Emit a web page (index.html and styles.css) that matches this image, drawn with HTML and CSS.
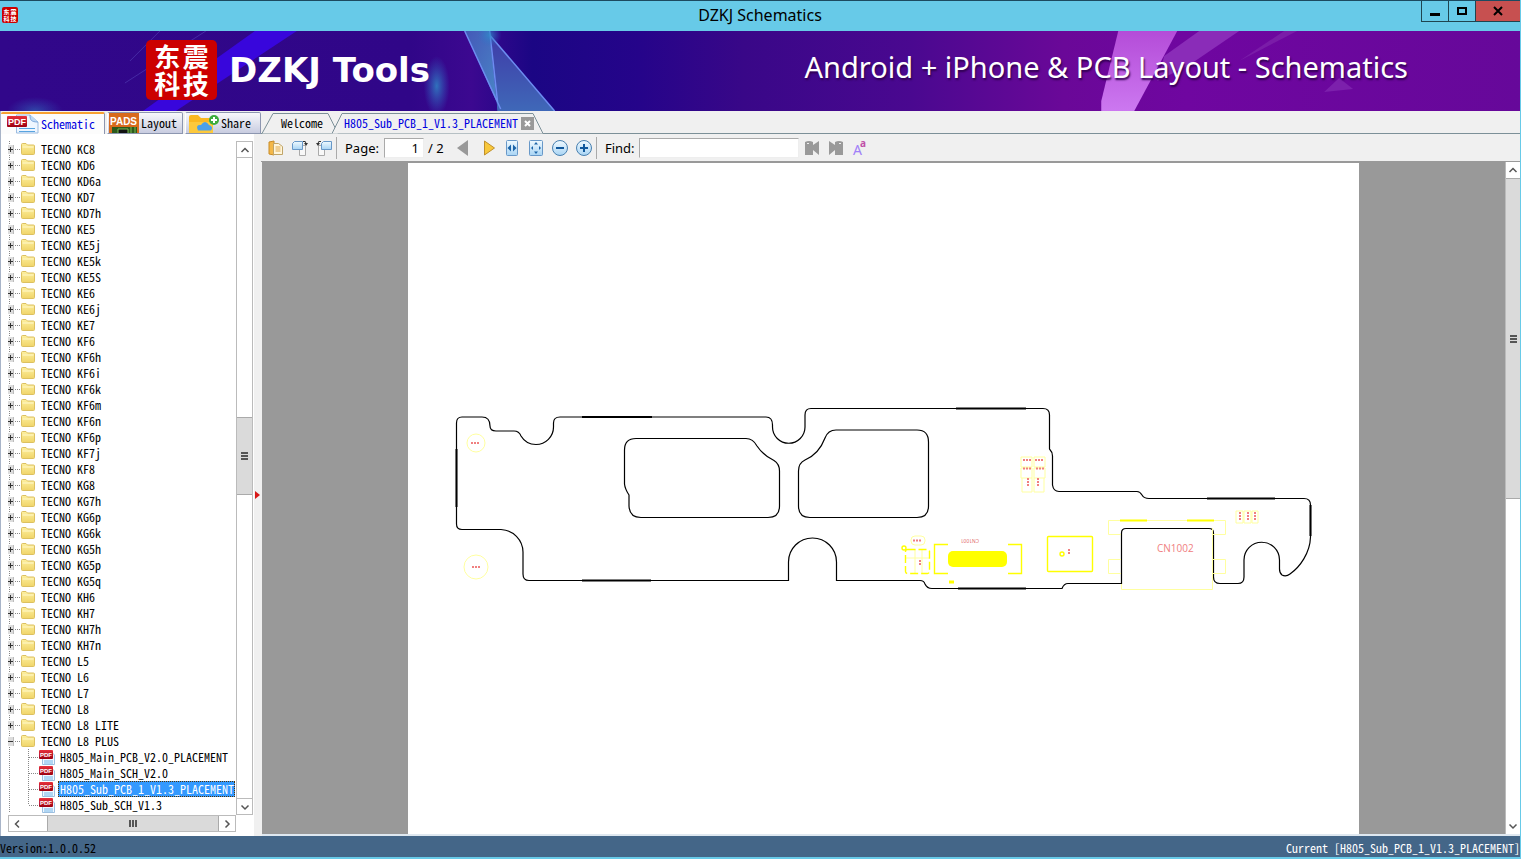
FILE: index.html
```html
<!DOCTYPE html>
<html lang="en">
<head>
  <meta charset="UTF-8" />
  <title>DZKJ Schematics</title>
  <link rel="stylesheet" href="styles.css">
</head>
<body>
  <svg class="defs" aria-hidden="true">
    <defs>
      <linearGradient id="gFolder" x1="0" y1="0" x2="0" y2="1"><stop offset="0" stop-color="#fdf0a0"/><stop offset="1" stop-color="#f0d468"/></linearGradient>
      <linearGradient id="gBlue" x1="0" y1="0" x2="0" y2="1"><stop offset="0" stop-color="#f0faff"/><stop offset="1" stop-color="#a8d4f4"/></linearGradient>
      <linearGradient id="gRed" x1="0" y1="0" x2="0" y2="1"><stop offset="0" stop-color="#e8303c"/><stop offset="1" stop-color="#9c0010"/></linearGradient>
    </defs>
    <symbol id="folder" viewBox="0 0 14 12">
      <path d="M.5 10.500V1.500q0-1 1-1H5l1.500 1.500H12.500q1 0 1 1V10.500q0 1-1 1H1.500q-1 0-1-1z" fill="url(#gFolder)" stroke="#dcc060"/>
      <path d="M1.500 4H12.500" stroke="#fff8cc"/>
    </symbol>
    <symbol id="pdf" viewBox="0 0 16 16">
      <path d="M3.500 2v13.500h12V6l-4-4z" fill="#f2f8ff" stroke="#9cbfe0"/>
      <path d="M5 12h9M5 14h9" stroke="#6fb4e8"/>
      <rect x="0" y="1" width="14" height="9" rx="1" fill="url(#gRed)"/>
      <text x="1" y="8" class="pdf-text">PDF</text>
    </symbol>
    <symbol id="up" viewBox="0 0 10 10"><path d="M1.500 7L5 3.500 8.500 7" fill="none" stroke="#555" stroke-width="1.500"/></symbol>
    <symbol id="down" viewBox="0 0 10 10"><path d="M1.500 3.500L5 7 8.500 3.500" fill="none" stroke="#555" stroke-width="1.500"/></symbol>
    <symbol id="left" viewBox="0 0 10 10"><path d="M7 1.500L3.500 5 7 8.500" fill="none" stroke="#555" stroke-width="1.500"/></symbol>
    <symbol id="right" viewBox="0 0 10 10"><path d="M3.500 1.500L7 5 3.500 8.500" fill="none" stroke="#555" stroke-width="1.500"/></symbol>
  </svg>

  <header class="titlebar">
    <div class="app-icon"><span>东</span><span>震</span><span>科</span><span>技</span></div>
    <div class="title">DZKJ Schematics</div>
    <div class="window-buttons">
      <button aria-label="Minimize"><svg width="10" height="10"><path d="M0 8.500H10" stroke="#000" stroke-width="3"/></svg></button>
      <button aria-label="Maximize"><svg width="10" height="10"><path d="M1 2H9V8H1z" fill="none" stroke="#000" stroke-width="2"/></svg></button>
      <button class="close" aria-label="Close"><svg width="10" height="10"><path d="M1 1L9 9M9 1L1 9" stroke="#000" stroke-width="2"/></svg></button>
    </div>
  </header>

  <div class="banner">
    <svg class="banner-art" viewBox="0 0 1521 80" preserveAspectRatio="none" aria-hidden="true">
      <defs>
        <linearGradient id="glass" x1="0" y1="0" x2="1" y2="1"><stop offset="0" stop-color="#4458b8"/><stop offset="1" stop-color="#4a8cc8"/></linearGradient>
        <linearGradient id="glass2" x1="0" y1="0" x2="0" y2="1"><stop offset="0" stop-color="#3f3ba8"/><stop offset="1" stop-color="#3f68b8"/></linearGradient>
        <linearGradient id="pink" x1="0" y1="0" x2="0" y2="1"><stop offset="0" stop-color="#b44cd8"/><stop offset="1" stop-color="#cc78f0"/></linearGradient>
        <radialGradient id="glow"><stop offset="0" stop-color="#2f8cc8" stop-opacity=".8"/><stop offset="1" stop-color="#2f6cc8" stop-opacity="0"/></radialGradient>
      </defs>
      <path d="M255 0H297L176 80H143z" fill="#3806dc"/>
      <path d="M206 0L125 52M160 0L130 30" stroke="#5a4cc0" opacity=".5"/>
      <ellipse cx="437" cy="55" rx="13" ry="30" fill="url(#glow)"/>
      <ellipse cx="35" cy="80" rx="28" ry="14" fill="url(#glow)" opacity=".6"/>
      <path d="M465 0H490L498 80H501z" fill="url(#glass)"/>
      <path d="M490 4L555 80H498z" fill="url(#glass2)"/>
      <path d="M465 0L501 78M490 0L498 72M490 4L555 80" fill="none" stroke="#6c8cf0" stroke-width="1.500"/>
      <circle cx="490" cy="4" r="12" fill="url(#glow)"/>
      <path d="M1200 0H1240L1190 34 1158 50 1165 25z" fill="#8a2cb8"/>
      <path d="M1285 0H1298L1240 30z" fill="#7a1ca8"/>
      <path d="M1119 0H1178L1135 80H1102V70z" fill="url(#pink)"/>
      <path d="M1325 61L1340 47 1354 58z" fill="#7c20ac"/>
    </svg>
    <div class="logo"><span>东</span><span>震</span><span>科</span><span>技</span></div>
    <h1>DZKJ Tools</h1>
    <p>Android + iPhone &amp; PCB Layout - Schematics</p>
  </div>

  <main>
    <aside class="sidebar">
      <nav class="side-tabs">
        <button class="active">
          <svg width="32" height="20" viewBox="0 0 32 20" aria-hidden="true">
            <path d="M9.500 1v18H31V8l-8-7z" fill="#eef6ff" stroke="#9cbce0"/><path d="M23 1c0 5 1 7 8 7" fill="#bcd8f4" stroke="#7ca8dc"/>
            <path d="M12 14.500h16M12 17.500h16" stroke="#58a4e0"/>
            <rect x="0" y="2" width="20" height="11" rx="1" fill="url(#gRed)"/><text x="1" y="11" class="pdf-tab">PDF</text>
          </svg>Schematic
        </button>
        <button>
          <svg width="30" height="20" viewBox="0 0 30 20" aria-hidden="true">
            <rect width="30" height="20" fill="#d86a1c"/><rect x="3" y="14" width="25" height="6" fill="#2c5a1c"/>
            <path d="M9 20v-4h10v4M22 14v6M26 14v6" fill="#111" stroke="#78b850"/><text x="1" y="12" class="pads">PADS</text>
          </svg>Layout
        </button>
        <button>
          <svg width="32" height="20" viewBox="0 0 32 20" aria-hidden="true">
            <path d="M2 20V4q0-2 2-2h7l3 3h10q2 0 2 2v13z" fill="#fbb820"/><path d="M2 20V9h24v11z" fill="#fdc93c"/>
            <path d="M11 17.500q-3-6 3-5.500 4-6 8 0 5 2 2 5.500z" fill="#4ca0e8"/>
            <circle cx="27" cy="7" r="5" fill="#3cac3c"/><path d="M24 7h6M27 4v6" stroke="#fff" stroke-width="2"/>
          </svg>Share
        </button>
      </nav>
      <div class="tree-box">
        <ul class="tree" id="tree"></ul>
        <div class="vscroll tree-scroll">
          <button aria-label="Scroll up"><svg><use href="#up"/></svg></button>
          <div class="space-before"></div>
          <div class="thumb"><i></i></div>
          <div class="space-after"></div>
          <button aria-label="Scroll down"><svg><use href="#down"/></svg></button>
        </div>
        <div class="hscroll">
          <button aria-label="Scroll left"><svg><use href="#left"/></svg></button>
          <div class="thumb"><i></i></div>
          <button aria-label="Scroll right"><svg><use href="#right"/></svg></button>
        </div>
      </div>
      <button class="splitter" aria-label="Collapse sidebar"><svg width="5" height="8"><path d="M0 0L5 4 0 8z" fill="#d81818"/></svg></button>
    </aside>

    <section class="document">
      <nav class="doc-tabs">
        <button class="welcome">
          <svg viewBox="0 0 76 21" preserveAspectRatio="none" aria-hidden="true"><path d="M0 20.500L11 .5H66L76 20.500"/></svg>
          <span>Welcome</span>
        </button>
        <div class="open-tab">
          <svg viewBox="0 0 212 21" preserveAspectRatio="none" aria-hidden="true"><path d="M0 20.500L10 .5H201L211 20.500"/></svg>
          <a href="#">H805_Sub_PCB_1_V1.3_PLACEMENT</a>
          <button aria-label="Close tab"><svg width="7" height="7"><path d="M1 1L6 6M6 1L1 6" stroke="#fff" stroke-width="2"/></svg></button>
        </div>
      </nav>

      <div class="toolbar">
        <button aria-label="Open"><svg viewBox="0 0 16 16"><path d="M1 2l5-1v14l-5-1z" fill="#f4b848" stroke="#c88c28"/><path d="M5.500 3.500h5l4 3v8h-9z" fill="#fff6dc" stroke="#c0a468"/><path d="M7.500 7h5M7.500 9h5M7.500 11h5" stroke="#e0a848"/></svg></button>
        <button aria-label="Rotate right"><svg viewBox="0 0 16 16"><path d="M7.500 5.500h6v10h-6z" fill="#f8f8f8" stroke="#aaa"/><path d="M.5 3.500l2-2h8v8H.5z" fill="url(#gBlue)" stroke="#6898c8"/><path d="M11 1.500q3-1 3 2" fill="none" stroke="#333"/><path d="M12 3h4l-2 3z" fill="#333"/></svg></button>
        <button aria-label="Rotate left"><svg viewBox="0 0 16 16"><path d="M2.500 5.500h6v10h-6z" fill="#f8f8f8" stroke="#aaa"/><path d="M5.500 3.500l2-2h8v8h-10z" fill="url(#gBlue)" stroke="#6898c8"/><path d="M5 1.500q-3-1-3 2" fill="none" stroke="#333"/><path d="M0 3h4l-2 3z" fill="#333"/></svg></button>
        <hr>
        <label for="page">Page:</label>
        <input id="page" type="text" value="1">
        <span class="total">/ 2</span>
        <button aria-label="Previous page"><svg viewBox="0 0 16 16"><path d="M12 0v16L1 8z" fill="#999"/></svg></button>
        <button aria-label="Next page"><svg viewBox="0 0 16 16"><path d="M4.500 1v14L14.500 8z" fill="#f8c83c" stroke="#c0902c"/></svg></button>
        <button aria-label="Fit width"><svg viewBox="0 0 16 16"><rect x="2.500" y=".5" width="11" height="15" rx="1" fill="url(#gBlue)" stroke="#6898c8"/><path d="M7 4.500v7L3.500 8zM9 4.500v7L12.500 8z" fill="#1c64a8"/></svg></button>
        <button aria-label="Fit page"><svg viewBox="0 0 16 16"><rect x="1.500" y=".5" width="13" height="15" rx="1" fill="url(#gBlue)" stroke="#6898c8"/><path d="M8 2l2 2.500H6zM8 14l2-2.500H6zM3 8l2-2v4zM13 8l-2-2v4z" fill="#1c64a8"/></svg></button>
        <button aria-label="Zoom out"><svg viewBox="0 0 16 16"><circle cx="8" cy="8" r="7.500" fill="url(#gBlue)" stroke="#4880b0"/><path d="M4 8h8" stroke="#10589c" stroke-width="2"/></svg></button>
        <button aria-label="Zoom in"><svg viewBox="0 0 16 16"><circle cx="8" cy="8" r="7.500" fill="url(#gBlue)" stroke="#4880b0"/><path d="M4 8h8M8 4v8" stroke="#10589c" stroke-width="2"/></svg></button>
        <hr>
        <label for="find">Find:</label>
        <input id="find" type="text">
        <button aria-label="Find previous"><svg viewBox="0 0 16 16"><path d="M1 2q4-2 8 0v3l6-4v14l-6-5v5H1z" fill="#999"/><path d="M3 3.500h2" stroke="#eee"/></svg></button>
        <button aria-label="Find next"><svg viewBox="0 0 16 16"><path d="M15 2q-4-2-8 0v3L1 1v14l6-5v5h8z" fill="#999"/><path d="M11 3.500h2" stroke="#eee"/></svg></button>
        <button aria-label="Match case"><svg viewBox="0 0 16 16"><text x="1" y="15" class="case-big">A</text><text x="8" y="7" class="case-small">a</text></svg></button>
      </div>

      <div class="viewer">
        <div class="canvas">
          <svg class="sheet" viewBox="408 163 951 671" role="img" aria-label="H805 sub board placement">
            <g class="outline">
              <path d="M462 417H482Q490 417 490 426 490 431 496 431H514Q519 431 521 436A17.500 17.500 0 0 0 536 444.500 17.500 17.500 0 0 0 553.500 427V423Q553.500 417 560 417H766Q772.500 417 772.500 425V427A16 16 0 0 0 805 427V415Q805 408.500 811 408.500H1043Q1049.500 408.500 1049.500 415V449Q1052.500 452 1052.500 456V485Q1053.500 491.500 1059 491.500H1137Q1140 491.500 1142 495 1144 498.500 1149 498.500H1304Q1310.500 498.500 1310.500 505V537C1310 553 1300 567 1290 574Q1286 577 1282 575 1279.500 573 1279.500 569V560A17.500 17.500 0 0 0 1244 560V577Q1244 583.500 1238 583.500H1220Q1213.500 583.500 1213.500 577V533Q1213.500 528.500 1209 528.500H1126Q1121.500 528.500 1121.500 533V583.500H1068Q1064 583.500 1062 588.500H932Q927 588.500 925 584 924 580.500 920 580.500H836.500V562A24 24 0 0 0 788.500 562V580.500H529Q523 580.500 523 574V552A23 23 0 0 0 501 529.500H462Q456.500 529.500 456.500 524V423Q456.500 417 462 417z"/>
              <path d="M636 438.500H746Q753 438.500 757 446 763 455 774 460.500 779.500 464 779.500 471V506Q779.500 517.500 768 517.500H641Q629.500 517.500 629 506V495Q625 489 624.500 484V450Q624.500 438.500 636 438.500z"/>
              <path d="M836 430H917Q928.500 430 928.500 442V506Q928.500 517.500 917 517.500H810Q798.500 517.500 798.500 506V471Q798.500 463 805 460 819 454 825 438 828 430 836 430z"/>
            </g>
            <path class="thick" d="M582 417H652M956 408.500H1026M456.500 449V507M582 580.500H651M958 588.500H1026M1207 498.500H1275M1310.500 505V536"/>
            <g class="faint">
              <circle cx="476" cy="443" r="9"/><circle cx="476" cy="567" r="12"/>
              <path d="M1021 457h11v10h-11zM1034 457h11v10h-11zM1021 468h11v10h-11zM1034 468h11v10h-11zM1022 478v14h10v-14M1034 478v14h10v-14"/>
              <rect x="911" y="536" width="14" height="9" rx="4"/><path d="M1236 511h7v12h-7zM1244 511h7v12h-7zM1252 511h6v12h-6z"/>
              <path d="M1121 520.500H1108.500V534.500H1121M1213 520.500H1225.500V534.500H1213M1109 520.500H1225M1121 559.500H1108.500V573.500H1121M1213 559.500H1225.500V573.500H1213M1121.500 584V589.500H1212.500V528"/>
              <path d="M906 558h23M915 549v24M922 549v24"/>
            </g>
            <g class="marks">
              <rect x="1047.500" y="536.500" width="45" height="35" rx="1"/><circle cx="1062" cy="554" r="2"/>
              <path d="M948 544.500H934.500V573.500H948M1008 544.500H1021.500V573.500H1008"/>
              <path d="M1120 520.500H1147M1187 520.500H1214" stroke-width="2"/>
              <rect x="905.500" y="549.500" width="24" height="24" rx="2" stroke-dasharray="8 3"/>
              <circle cx="904" cy="548" r="2"/><path d="M949 582h5" stroke-width="3"/>
            </g>
            <rect x="948" y="551" width="59" height="16" rx="5" fill="#ff0"/>
            <path class="labels" d="M471 443h8M472 567h9M1023 460h8M1035 460h8M1023 468.500h8M1036 468.500h8M1028 478v8M1038 478v8M913 540.500h9M1069 549v6M920 560v6M1240 512v9M1248 512v9M1255 512v9"/>
            <text class="part" x="1157" y="552">CN1002</text>
            <text class="part-small" transform="rotate(180 971 541)" x="963" y="543">CN1001</text>
          </svg>
        </div>
        <div class="vscroll doc-scroll">
          <button aria-label="Scroll up"><svg><use href="#up"/></svg></button>
          <div class="thumb"><i></i></div>
          <div class="space-after"></div>
          <button aria-label="Scroll down"><svg><use href="#down"/></svg></button>
        </div>
      </div>
    </section>
  </main>

  <footer>
    <span>Version:1.0.0.52</span>
    <span class="current">Current [H805_Sub_PCB_1_V1.3_PLACEMENT]</span>
  </footer>

  <script>
    const models = [
      "KC8", "KD6", "KD6a", "KD7", "KD7h", "KE5", "KE5j", "KE5k", "KE5S", "KE6", "KE6j", "KE7",
      "KF6", "KF6h", "KF6i", "KF6k", "KF6m", "KF6n", "KF6p", "KF7j", "KF8", "KG8", "KG7h", "KG6p",
      "KG6k", "KG5h", "KG5p", "KG5q", "KH6", "KH7", "KH7h", "KH7n", "L5", "L6", "L7", "L8",
      "L8 LITE", "L8 PLUS"
    ];
    const files = [
      "H805_Main_PCB_V2.0_PLACEMENT", "H805_Main_SCH_V2.0",
      "H805_Sub_PCB_1_V1.3_PLACEMENT", "H805_Sub_SCH_V1.3"
    ];
    const tree = document.getElementById("tree");

    // phone models
    models.forEach(model => {
      const open = model === "L8 PLUS";
      const li = document.createElement("li");
      li.innerHTML = `<button class="expander${open ? " open" : ""}" aria-label="Toggle ${model}"></button><svg class="folder"><use href="#folder"/></svg><a href="#">TECNO ${model}</a>`;
      tree.appendChild(li);
    });

    // files of the open model
    files.forEach(file => {
      const li = document.createElement("li");
      li.className = "file";
      li.innerHTML = `<svg class="pdf"><use href="#pdf"/></svg><a href="#">${file}</a>`;
      if (file.includes("Sub_PCB")) li.classList.add("selected");
      tree.appendChild(li);
    });
  </script>
</body>
</html>
```

FILE: styles.css
```css
* {
  box-sizing: border-box;
}

body {
  margin: 0;
  height: 100vh;
  display: flex;
  flex-direction: column;
  background: #f0f0f0;
  border-right: 1px solid #67cae8;
  border-bottom: 2px solid #67cae8;
  font-family: "Noto Sans Mono CJK SC", "Liberation Mono", monospace;
  font-size: 12px;
  line-height: 16px;
  color: #000;
  overflow: hidden;
}

button {
  border: 0;
  padding: 0;
  margin: 0;
  background: none;
  font: inherit;
  color: inherit;
}

a {
  color: inherit;
  text-decoration: none;
}

.defs {
  position: absolute;
  width: 0;
  height: 0;
}

/* title bar */
.titlebar {
  display: grid;
  grid-template-columns: 1fr auto 1fr;
  flex: none;
  height: 31px;
  background: #67cae8;
  border-top: 1px solid #1c4a60;
}

.app-icon, .logo {
  display: grid;
  grid-template-columns: 1fr 1fr;
  background: #cc0000;
  color: #fff;
  font-family: "Noto Sans CJK SC", sans-serif;
  font-weight: bold;
  text-align: center;
}

.app-icon {
  width: 16px;
  height: 16px;
  margin: 6px 2px;
  border-radius: 2px;
  padding: 1px;
  font-size: 6px;
  line-height: 7px;
}

.title {
  font: 16px/29px "Noto Sans", sans-serif;
}

.window-buttons {
  display: flex;
  justify-content: flex-end;
}

.window-buttons button {
  width: 27px;
  height: 21px;
  border: 1px solid #1f4450;
  border-top: 0;
  border-right: 0;
  display: flex;
  align-items: center;
  justify-content: center;
}

.window-buttons .close {
  width: 45px;
  background: #c75050;
}

/* banner */
.banner {
  position: relative;
  flex: none;
  display: flex;
  align-items: center;
  height: 80px;
  padding: 0 112px 2px 146px;
  color: #fff;
  background: linear-gradient(90deg, #31078a 0, #300688 27%, #3c0890 31%, #1b0684 35%, #25048a 42%, #390788 49%, #4a0890 60%, #6a0898 70%, #6f06a0 78%, #66089a 100%);
  font-family: "Noto Sans", sans-serif;
}

.banner-art {
  position: absolute;
  top: 0;
  left: 0;
  width: 100%;
  height: 100%;
}

.logo, .banner h1, .banner p {
  position: relative;
}

.logo {
  width: 71px;
  height: 60px;
  border-radius: 5px;
  padding: 3px 7px;
  font-size: 26px;
  line-height: 26px;
}

.banner h1 {
  margin: 0 auto 0 12px;
  font: bold 34px/40px "DejaVu Sans", sans-serif;
}

.banner p {
  margin: 0 0 6px;
  font-size: 29px;
  line-height: 40px;
  text-shadow: 1px 2px 2px #300050;
}

main {
  flex: 1;
  min-height: 0;
  display: flex;
}

/* left panel */
.sidebar {
  flex: none;
  width: 261px;
  display: grid;
  grid-template: 23px 1fr / 253px 1fr;
  background: #f0f0f0;
  border-left: 1px solid #a8b4c8;
}

.side-tabs {
  grid-column: 1 / 3;
  display: flex;
  gap: 2px;
  padding-top: 1px;
}

.side-tabs button {
  display: flex;
  align-items: center;
  gap: 2px;
  width: 76px;
  padding-left: 1px;
  border: 1px solid #8c96b0;
  border-left-color: #fff;
  border-radius: 2px 2px 0 0;
  background: linear-gradient(#f8f8fc, #c8cce0);
}

.side-tabs .active {
  width: 104px;
  padding-left: 6px;
  border: 0;
  border-top: 2px solid #f8a030;
  border-right: 1px solid #8c96b0;
  background: #fcfcfc;
  color: #0000e0;
}

.tree-box {
  display: grid;
  grid-template: 1fr 17px / 1fr 17px;
  min-height: 0;
  padding: 7px 1px 4px 7px;
  background: #fff;
}

.tree {
  list-style: none;
  margin: 0;
  padding: 0;
  overflow: hidden;
  min-height: 0;
  white-space: nowrap;
}

.tree li {
  display: flex;
  align-items: center;
  height: 16px;
  background: repeating-linear-gradient(#888 0 1px, transparent 1px 2px) 1px 0 / 1px 16px no-repeat;
}

.expander {
  position: relative;
  width: 6px;
  height: 9px;
  background: linear-gradient(#333, #333) 0 4px / 5px 1px no-repeat, linear-gradient(#333, #333) 2px 2px / 1px 5px no-repeat, #ddd;
  border-right: 1px solid #bbb;
}

.expander.open {
  background: linear-gradient(#333, #333) 0 4px / 5px 1px no-repeat, #ddd;
}

.expander::after {
  content: "";
  position: absolute;
  left: 7px;
  top: 4px;
  width: 5px;
  border-top: 1px dotted #888;
}

.folder {
  width: 14px;
  height: 12px;
  margin: 0 5px 0 7px;
}

.tree a {
  height: 16px;
  line-height: 15px;
  padding: 0 1px;
}

.tree .file {
  padding-left: 31px;
  background: repeating-linear-gradient(#888 0 1px, transparent 1px 2px) 1px 0 / 1px 16px no-repeat, repeating-linear-gradient(#888 0 1px, transparent 1px 2px) 20px 0 / 1px 16px no-repeat, repeating-linear-gradient(90deg, #888 0 1px, transparent 1px 2px) 21px 8px / 10px 1px no-repeat;
}

.tree .file:last-child {
  background-size: 1px 16px, 1px 8px, 10px 1px;
}

.tree .file a {
  padding-left: 2px;
}

.pdf {
  width: 16px;
  height: 16px;
  margin-right: 3px;
}

.tree .selected a {
  background: #3399ff;
  color: #fff;
  outline: 1px dotted #553300;
  outline-offset: -1px;
}

.pdf-text {
  font: bold 6px "Liberation Sans", sans-serif;
  fill: #fff;
}

.pdf-tab {
  font: bold 9px "Liberation Sans", sans-serif;
  fill: #fff;
}

.pads {
  font: bold 10px "Liberation Sans", sans-serif;
  fill: #fff;
}

/* scroll bars */
.vscroll, .hscroll {
  display: flex;
  background: #fff;
  border: 1px solid #bbb;
}

.vscroll {
  flex-direction: column;
}

.vscroll button, .hscroll button {
  flex: none;
  display: flex;
  align-items: center;
  justify-content: center;
}

.vscroll button {
  height: 16px;
}

.vscroll svg, .hscroll svg {
  width: 10px;
  height: 10px;
}

.thumb {
  display: flex;
  align-items: center;
  justify-content: center;
  background: #dadada;
}

.vscroll .thumb {
  border-top: 1px solid #aaa;
  border-bottom: 1px solid #aaa;
}

.vscroll i {
  width: 7px;
  height: 8px;
  background: repeating-linear-gradient(#555 0 2px, transparent 2px 3px);
}

.tree-scroll button:first-child {
  border-bottom: 1px solid #bbb;
}

.tree-scroll button:last-child {
  border-top: 1px solid #bbb;
}

.tree-scroll .space-before {
  flex: 260;
}

.tree-scroll .thumb {
  flex: 76;
}

.tree-scroll .space-after {
  flex: 304;
}

.hscroll button {
  width: 16px;
}

.hscroll .thumb {
  flex: 1;
  margin-left: 22px;
  border: 1px solid #aaa;
  border-width: 0 1px;
}

.hscroll i {
  width: 8px;
  height: 7px;
  background: repeating-linear-gradient(90deg, #555 0 2px, transparent 2px 3px);
}

.splitter {
  display: flex;
  align-items: center;
  padding: 20px 0 0 1px;
}

/* document */
.document {
  flex: 1;
  min-width: 0;
  display: flex;
  flex-direction: column;
}

.doc-tabs {
  flex: none;
  display: flex;
  height: 23px;
  padding: 2px 0 0 1px;
  border-bottom: 1px solid #7c9098;
}

.welcome, .open-tab {
  position: relative;
  display: flex;
  align-items: center;
}

.welcome {
  width: 76px;
  padding-left: 19px;
}

.open-tab {
  width: 212px;
  margin-left: -6px;
  padding-left: 12px;
  gap: 3px;
  color: #0000e0;
}

.welcome > svg, .open-tab > svg {
  position: absolute;
  top: 0;
  left: 0;
  width: 100%;
  height: 21px;
  fill: #f0f0f0;
  stroke: #7c9098;
}

.welcome span, .open-tab a, .open-tab button {
  position: relative;
}

.open-tab button {
  display: flex;
  align-items: center;
  justify-content: center;
  width: 13px;
  height: 13px;
  background: #999;
}

.toolbar {
  flex: none;
  display: flex;
  align-items: center;
  height: 28px;
  padding-left: 3px;
  border-bottom: 1px solid #999;
  font: 13px/20px "Noto Sans", sans-serif;
}

.toolbar button {
  display: flex;
  justify-content: center;
  width: 24px;
}

.toolbar button svg {
  width: 16px;
  height: 16px;
  overflow: visible;
}

.toolbar hr {
  width: 1px;
  height: 22px;
  margin: 0 8px 0 0;
  border: 0;
  background: #aaa;
}

.toolbar input {
  height: 20px;
  border: 1px solid #aaa;
  border-right-color: #eee;
  border-bottom-color: #eee;
  background: #fff;
  font: inherit;
}

#page {
  width: 40px;
  margin: 0 4px 0 5px;
  padding: 0 4px;
  text-align: right;
}

.total {
  width: 24px;
}

#find {
  width: 160px;
  margin: 0 1px 0 4px;
}

.case-big {
  font: 14px "Noto Sans", sans-serif;
  fill: #a080f8;
}

.case-small {
  font: bold 10px "Noto Sans", sans-serif;
  fill: #c050a8;
}

.viewer {
  flex: 1;
  min-height: 0;
  display: flex;
  margin-left: 1px;
  border-bottom: 2px solid #dfe8f0;
}

.canvas {
  flex: 1;
  min-width: 0;
  display: flex;
  justify-content: center;
  padding-top: 1px;
  background: #999;
}

.sheet {
  height: 100%;
  background: #fff;
}

.doc-scroll {
  width: 15px;
  border-width: 0 0 0 1px;
}

.doc-scroll .thumb {
  flex: 1;
}

.doc-scroll .space-after {
  flex: 1;
}

/* board drawing */
.outline {
  fill: none;
  stroke: #000;
  stroke-width: 1.2;
}

.thick {
  stroke: #000;
  stroke-width: 2;
}

.faint {
  fill: none;
  stroke: #ffffa0;
}

.marks {
  fill: none;
  stroke: #ff0;
  stroke-width: 1.4;
}

.labels {
  fill: none;
  stroke: #f08080;
  stroke-width: 2;
  stroke-dasharray: 2 1;
}

.part {
  font: 10px "Open Sans", sans-serif;
  fill: #f08080;
}

.part-small {
  font: 5px "Open Sans", sans-serif;
  fill: #e06060;
}

footer {
  flex: none;
  display: flex;
  justify-content: space-between;
  height: 21px;
  padding-top: 4px;
  background: #446688;
}

.current {
  color: #fff;
}
```
